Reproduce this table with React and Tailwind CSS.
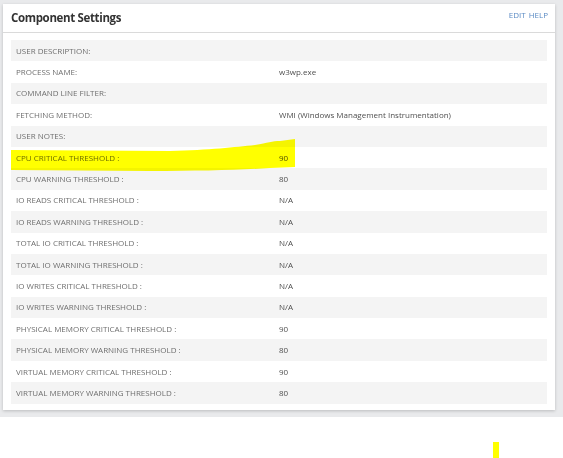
import React from "react";

const rows = [
  ["USER DESCRIPTION:", ""],
  ["PROCESS NAME:", "w3wp.exe"],
  ["COMMAND LINE FILTER:", ""],
  ["FETCHING METHOD:", "WMI (Windows Management Instrumentation)"],
  ["USER NOTES:", ""],
  ["CPU CRITICAL THRESHOLD :", "90"],
  ["CPU WARNING THRESHOLD :", "80"],
  ["IO READS CRITICAL THRESHOLD :", "N/A"],
  ["IO READS WARNING THRESHOLD :", "N/A"],
  ["TOTAL IO CRITICAL THRESHOLD :", "N/A"],
  ["TOTAL IO WARNING THRESHOLD :", "N/A"],
  ["IO WRITES CRITICAL THRESHOLD :", "N/A"],
  ["IO WRITES WARNING THRESHOLD :", "N/A"],
  ["PHYSICAL MEMORY CRITICAL THRESHOLD :", "90"],
  ["PHYSICAL MEMORY WARNING THRESHOLD :", "80"],
  ["VIRTUAL MEMORY CRITICAL THRESHOLD :", "90"],
  ["VIRTUAL MEMORY WARNING THRESHOLD :", "80"],
];

export default function App() {
  return (
    <div className="relative w-[563px] h-[458px] bg-white font-['Open_Sans',sans-serif] overflow-hidden">
      <div className="h-[417px] bg-[#e9eaec] pt-[4px] pl-[3px] pr-[8px]">
        <div className="bg-white shadow-[0_1px_3px_rgba(0,0,0,0.2)] pb-[6px]">
          <div className="h-[29px] border-b border-[#dadada] flex justify-between pl-[8px] pr-[7px]">
            <div className="flex items-center text-[11.5px] font-bold text-[#333] tracking-[-0.35px]">
              Component Settings
            </div>
            <div className="pt-[5px] text-[8px] text-[#5b8bc4] flex gap-[3px]">
              <span>EDIT</span>
              <span>HELP</span>
            </div>
          </div>
          <div className="px-[8px] pt-[7px]">
            {rows.map(([k, v], i) => (
              <div
                key={i}
                className={`grid grid-cols-[263px_1fr] h-[21.4px] items-center text-[8px] ${i % 2 === 0 ? "bg-[#f4f4f4]" : "bg-white"}`}
              >
                <div className="pl-[5px] text-[#6f6f6f]">{k}</div>
                <div className="pl-[5px] text-[#4f4f4f]">{v}</div>
              </div>
            ))}
          </div>
        </div>
      </div>
      <svg
        className="absolute left-0 top-0 mix-blend-multiply pointer-events-none"
        width="563"
        height="458"
        viewBox="0 0 563 458"
      >
        <path
          d="M11 150 L170 151 C210 150 235 147 255 145 C268 143 272 141 280 141 L295 139 L295 167 L270 168 C240 170 200 171 150 171 L11 170 Z"
          fill="#ffff00"
        />
        <rect x="493" y="442" width="6" height="16" fill="#ffff00" />
      </svg>
    </div>
  );
}
